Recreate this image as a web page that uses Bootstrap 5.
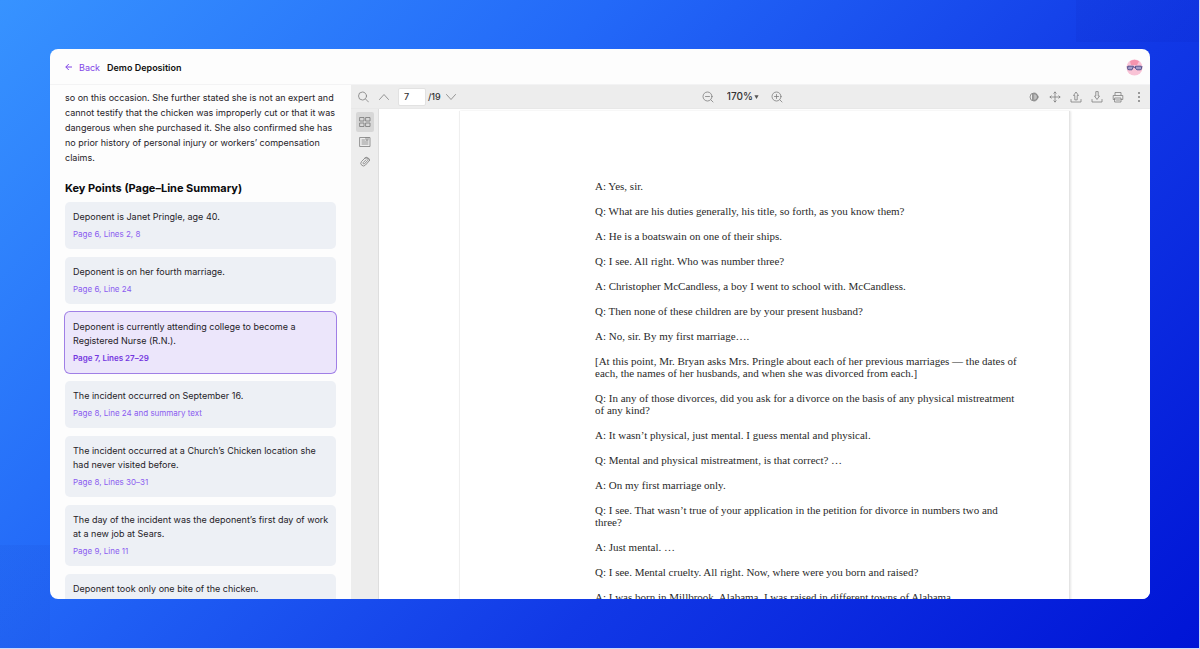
<!DOCTYPE html>
<html lang="en">
<head>
<meta charset="utf-8">
<meta name="viewport" content="width=device-width, initial-scale=1">
<title>Demo Deposition</title>
<link href="https://cdn.jsdelivr.net/npm/bootstrap@5.3.0/dist/css/bootstrap.min.css" rel="stylesheet">
<style>
  body {
    font-family: Inter, "Liberation Sans", sans-serif;
    font-size: 9px;
    line-height: 15px;
    color: #1f2228;
    padding: 49px 49px 49px 50px;
    border-right: 1px solid #cdd8fa;
    border-bottom: 1px solid #cdd8fa;
    background:
      linear-gradient(rgba(0, 10, 150, .07), rgba(0, 10, 150, .07)) right top / 124px 42px no-repeat,
      linear-gradient(rgba(20, 50, 180, .08), rgba(20, 50, 180, .08)) left bottom / 50px 104px no-repeat,
      linear-gradient(135deg, #3793ff 0%, #2369f8 33%, #1138e6 65%, #0014d6 100%);
  }
  .app-window { background: #fdfdfd; border-radius: 8px; }
  .app-header { height: 36px; padding: 1px 7px 0 15px; border-bottom: 1px solid #f3f3f4; }
  .back-link { color: #8247e8; gap: 7px; }
  .doc-title { font-size: 9px; line-height: 15px; font-weight: 600; color: #111; margin-left: 7px; }
  .summary { width: 301px; padding: 5px 15px 0; }
  .summary p { margin-bottom: 16px; }
  .summary h2 { font-size: 11px; line-height: 15px; font-weight: 700; color: #0b0b0d; margin-bottom: 6px; }
  .point { display: block; padding: 8px 4px 8px 8px; border-radius: 5px; background: #edf0f5; color: inherit; line-height: 14px; text-decoration: none; margin-bottom: 8px; }
  .point-ref { display: block; font-size: 8px; color: #8b5cf0; margin-top: 3px; }
  .point.active { background: #ece6fb; box-shadow: 0 0 0 1px #a07fe6; }
  .point.active .point-ref { color: #7436e0; font-weight: 600; }
  .viewer-bar { height: 24px; background: #ededed; padding: 0 0 0 1px; color: #333; border-bottom: 1px solid #e8e8e8; }
  .viewer-rail { width: 28px; background: #ededed; border-right: 1px solid #dedede; padding-top: 3px; }
  .tool { border: 0; padding: 0; background: none; color: #7d7d7d; width: 21px; height: 20px; display: flex; align-items: center; justify-content: center; }
  .tool svg { width: 12px; height: 12px; fill: none; stroke: currentColor; stroke-width: .8; stroke-linecap: round; stroke-linejoin: round; }
  .tool.active { background: #d7d7d7; border-radius: 2px; height: 20px; color: #777; }
  .viewer-rail .tool { width: 18px; }
  .page-box { width: 28px; height: 18px; border: 1px solid #e2e2e2; border-radius: 2px; background: #fff; padding: 0 5px; margin: 0 2px 0 4px; font-size: 9px; font-weight: 500; color: #333; }
  .page-total { font-weight: 500; }
  .zoom-select { appearance: none; border: 0; background: none; font-size: 10px; font-weight: 500; color: #333; padding: 0; width: 27px; }
  .paper { background: #fff; margin: 2px 80px 0; padding: 69px 40px 0 135px; border-left: 1px solid #efefef; border-right: 1px solid #e4e4e4; box-shadow: 1px 0 2px #e6e6e6;
    font-family: "Liberation Serif", serif; font-size: 11px; line-height: 12px; color: #2a2a2a; }
  .paper p { margin-bottom: 13px; }
</style>
</head>
<body class="vh-100 d-flex flex-column">
<main class="app-window flex-grow-1 d-flex flex-column overflow-hidden">
  <header class="app-header d-flex align-items-center flex-shrink-0">
    <a href="#" class="back-link d-flex align-items-center text-decoration-none">
      <svg width="7" height="8" viewBox="0 0 7 8" fill="none" stroke="currentColor" aria-hidden="true"><path d="M7 4H.8M3.800 1 .8 4l3 3"/></svg>Back</a>
    <h1 class="doc-title mb-0">Demo Deposition</h1>
    <svg class="ms-auto" width="17" height="17" viewBox="0 0 17 17" role="img" aria-label="Account">
      <circle cx="8.500" cy="8.500" r="8" fill="#f9c3d6"/>
      <path d="M4 2.200a8 8 0 0 1 9 0L11 6H5z" fill="#f594ae"/>
      <g fill="#a49cc8" stroke="#4b4a86" stroke-width=".9"><path d="M2 7.200h5.500L6 10.800H3a1.500 1.500 0 0 1-1.500-1.500zM9.500 7.200H15.200l.4 2a1.500 1.500 0 0 1-1.500 1.600H11L9.500 9.500z"/><path d="M7.500 8.300h2M.8 7.800h1M15.500 7.800h1"/></g>
    </svg>
  </header>
  <div class="d-flex flex-grow-1 overflow-hidden">
    <aside class="summary flex-shrink-0 overflow-hidden">
      <p>so on this occasion. She further stated she is not an expert and cannot testify that the chicken was improperly cut or that it was dangerous when she purchased it. She also confirmed she has no prior history of personal injury or workers’ compensation claims.</p>
      <h2>Key Points (Page–Line Summary)</h2>
      <a href="#" class="point">Deponent is Janet Pringle, age 40.<span class="point-ref">Page 6, Lines 2, 8</span></a>
      <a href="#" class="point">Deponent is on her fourth marriage.<span class="point-ref">Page 6, Line 24</span></a>
      <a href="#" class="point active" aria-current="true">Deponent is currently attending college to become a Registered Nurse (R.N.).<span class="point-ref">Page 7, Lines 27–29</span></a>
      <a href="#" class="point">The incident occurred on September 16.<span class="point-ref">Page 8, Line 24 and summary text</span></a>
      <a href="#" class="point">The incident occurred at a Church’s Chicken location she had never visited before.<span class="point-ref">Page 8, Lines 30–31</span></a>
      <a href="#" class="point">The day of the incident was the deponent’s first day of work at a new job at Sears.<span class="point-ref">Page 9, Line 11</span></a>
      <a href="#" class="point">Deponent took only one bite of the chicken.</a>
    </aside>
    <section class="flex-grow-1 d-flex flex-column overflow-hidden" aria-label="Document viewer">
      <div class="viewer-bar d-flex align-items-center justify-content-between flex-shrink-0">
        <div class="d-flex align-items-center">
          <button class="tool" aria-label="Search"><svg viewBox="0 0 12 12"><circle cx="5.500" cy="5" r="4"/><path d="m8.500 8 3 3"/></svg></button>
          <button class="tool" aria-label="Previous page"><svg viewBox="0 0 12 12"><path d="m1.500 8.500 4.500-5 4.500 5"/></svg></button>
          <input class="page-box" type="text" value="7" aria-label="Page number">
          <span class="page-total">/19</span>
          <button class="tool" aria-label="Next page"><svg viewBox="0 0 12 12"><path d="m1.500 3.500 4.500 5 4.500-5"/></svg></button>
        </div>
        <div class="d-flex align-items-center">
          <button class="tool" aria-label="Zoom out"><svg viewBox="0 0 12 12"><circle cx="5.500" cy="5.500" r="4.500"/><path d="M3.500 5.500h4M9 9l2 2"/></svg></button>
          <select class="zoom-select ms-2" aria-label="Zoom"><option>170%</option></select>
          <svg width="5" height="6" viewBox="0 0 6 6" fill="#555" aria-hidden="true"><path d="M.5 1h5L3 5.500z"/></svg>
          <button class="tool ms-2" aria-label="Zoom in"><svg viewBox="0 0 12 12"><circle cx="5.500" cy="5.500" r="4.500"/><path d="M3.500 5.500h4M5.500 3.500v4M9 9l2 2"/></svg></button>
        </div>
        <div class="d-flex align-items-center">
          <button class="tool" aria-label="Theme"><svg viewBox="0 0 12 12"><circle cx="6" cy="6" r="4"/><path d="M6 2.500a3.500 3.500 0 0 1 0 7zM4.500 3v6" fill="currentColor" fill-opacity=".4"/></svg></button>
          <button class="tool" aria-label="Pan"><svg viewBox="0 0 12 12"><path d="M6 1v10M1 6h10M4.800 2.200 6 1l1.200 1.200M4.800 9.800 6 11l1.200-1.200M2.200 4.800 1 6l1.200 1.200M9.800 4.800 11 6 9.800 7.200"/></svg></button>
          <button class="tool" aria-label="Open file"><svg viewBox="0 0 12 12"><path d="M4.800 8.500V4.500H3.500L6 1l2.500 3.500H7.200v4zM1 8.500v2.500h10V8.500"/></svg></button>
          <button class="tool" aria-label="Download"><svg viewBox="0 0 12 12"><path d="M4.800 1v4H3.500L6 8.500 8.500 5H7.200V1zM1 8.500v2.500h10V8.500"/></svg></button>
          <button class="tool" aria-label="Print"><svg viewBox="0 0 12 12"><path d="M3 4V1.500h6V4M3 8.500H1.200v-4h9.600v4H9M3 7h6v4H3zM4.500 9h3"/></svg></button>
          <button class="tool" aria-label="More"><svg viewBox="0 0 12 12"><g fill="currentColor" stroke="none"><circle cx="6" cy="2" r="1"/><circle cx="6" cy="6" r="1"/><circle cx="6" cy="10" r="1"/></g></svg></button>
        </div>
      </div>
      <div class="d-flex flex-grow-1 overflow-hidden">
        <nav class="viewer-rail flex-shrink-0 d-flex flex-column align-items-center" aria-label="Panels">
          <button class="tool active" aria-label="Thumbnails"><svg viewBox="0 0 12 12"><path d="M1 1.500h4v3.500H1zM7 1.500h4v3.500H7zM1 7h4v3.500H1zM7 7h4v3.500H7z"/></svg></button>
          <button class="tool" aria-label="Bookmarks"><svg viewBox="0 0 12 12"><path d="M1 1.500h10v9H1zM3 4h2.500M3 6h6M3 8h6M7 1.500v3l1-.8 1 .8v-3"/></svg></button>
          <button class="tool" aria-label="Attachments"><svg viewBox="0 0 12 12"><path d="M10.500 4.500 6.500 9a2.600 2.600 0 0 1-4-3.500l3.500-3.500a1.800 1.800 0 0 1 2.700 2.400L5.500 7.800a.9.9 0 0 1-1.300-1.200L7 3.800M6 2h3a2 2 0 0 1 1.500 2.500"/></svg></button>
        </nav>
        <div class="flex-grow-1 overflow-hidden bg-white">
          <article class="paper h-100">
            <p>A: Yes, sir.</p>
            <p>Q: What are his duties generally, his title, so forth, as you know them?</p>
            <p>A: He is a boatswain on one of their ships.</p>
            <p>Q: I see. All right. Who was number three?</p>
            <p>A: Christopher McCandless, a boy I went to school with. McCandless.</p>
            <p>Q: Then none of these children are by your present husband?</p>
            <p>A: No, sir. By my first marriage….</p>
            <p>[At this point, Mr. Bryan asks Mrs. Pringle about each of her previous marriages — the dates of<br>each, the names of her husbands, and when she was divorced from each.]</p>
            <p>Q: In any of those divorces, did you ask for a divorce on the basis of any physical mistreatment<br>of any kind?</p>
            <p>A: It wasn’t physical, just mental. I guess mental and physical.</p>
            <p>Q: Mental and physical mistreatment, is that correct? …</p>
            <p>A: On my first marriage only.</p>
            <p>Q: I see. That wasn’t true of your application in the petition for divorce in numbers two and<br>three?</p>
            <p>A: Just mental. …</p>
            <p>Q: I see. Mental cruelty. All right. Now, where were you born and raised?</p>
            <p>A: I was born in Millbrook, Alabama. I was raised in different towns of Alabama</p>
          </article>
        </div>
      </div>
    </section>
  </div>
</main>
<script src="https://cdn.jsdelivr.net/npm/bootstrap@5.3.0/dist/js/bootstrap.bundle.min.js"></script>
</body>
</html>
